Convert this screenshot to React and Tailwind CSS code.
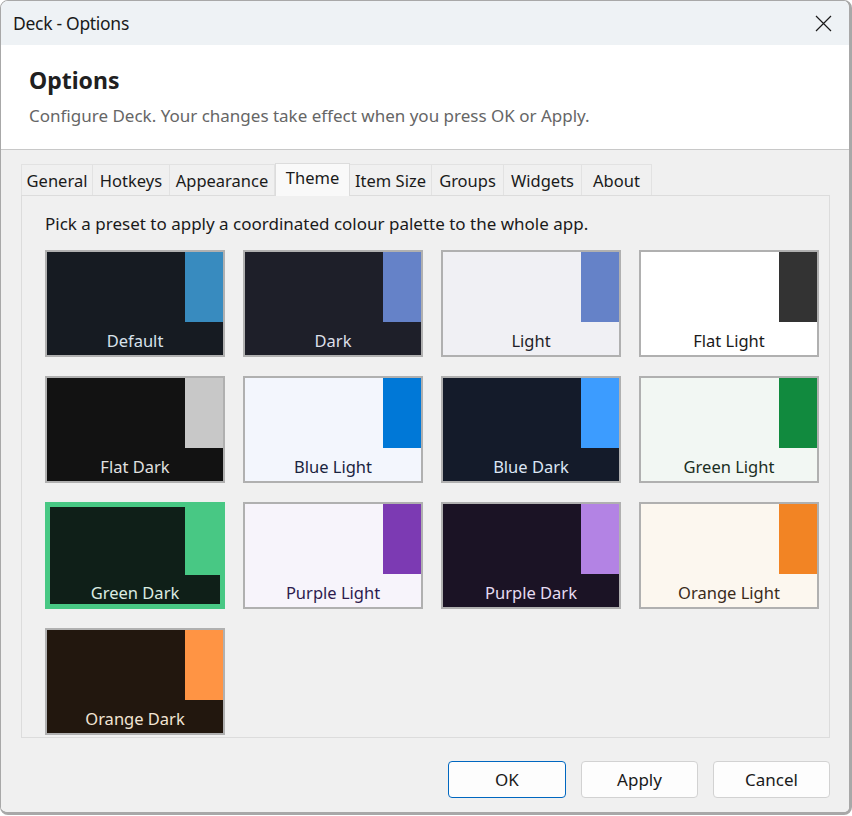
import React from 'react';

const TABS = [
  { name: 'General', w: 'w-[72px]' },
  { name: 'Hotkeys', w: 'w-[77px]' },
  { name: 'Appearance', w: 'w-[105px]' },
  { name: 'Theme', w: 'w-[75px]', active: true },
  { name: 'Item Size', w: 'w-[82px]' },
  { name: 'Groups', w: 'w-[72px]' },
  { name: 'Widgets', w: 'w-[78px]' },
  { name: 'About', w: 'w-[70px]' },
];

const PRESETS = [
  { name: 'Default', bg: 'bg-[#161b22]', accent: 'bg-[#388bbf]', text: 'text-[#d8e2ec]' },
  { name: 'Dark', bg: 'bg-[#1e1f29]', accent: 'bg-[#6582c8]', text: 'text-[#dcdfe8]' },
  { name: 'Light', bg: 'bg-[#f0f0f4]', accent: 'bg-[#6582c8]', text: 'text-[#1e1e28]' },
  { name: 'Flat Light', bg: 'bg-white', accent: 'bg-[#333333]', text: 'text-[#1a1a1a]' },
  { name: 'Flat Dark', bg: 'bg-[#121212]', accent: 'bg-[#c8c8c8]', text: 'text-[#e0e0e0]' },
  { name: 'Blue Light', bg: 'bg-[#f3f6fd]', accent: 'bg-[#0078d7]', text: 'text-[#1a2440]' },
  { name: 'Blue Dark', bg: 'bg-[#141b2a]', accent: 'bg-[#3c9cff]', text: 'text-[#dce6f5]' },
  { name: 'Green Light', bg: 'bg-[#f2f7f3]', accent: 'bg-[#118a3e]', text: 'text-[#1a2e22]' },
  { name: 'Green Dark', bg: 'bg-[#0f1f18]', accent: 'bg-[#48c884]', text: 'text-[#dcece2]', selected: true },
  { name: 'Purple Light', bg: 'bg-[#f7f4fb]', accent: 'bg-[#7c3ab3]', text: 'text-[#2d1b4e]' },
  { name: 'Purple Dark', bg: 'bg-[#1b1325]', accent: 'bg-[#b383e4]', text: 'text-[#e6dcf2]' },
  { name: 'Orange Light', bg: 'bg-[#fcf7ef]', accent: 'bg-[#f28424]', text: 'text-[#3a2a1a]' },
  { name: 'Orange Dark', bg: 'bg-[#22170e]', accent: 'bg-[#ff9444]', text: 'text-[#f2e4d4]' },
];

const Tile = ({ preset }) => {
  const sel = preset.selected;
  return (
    <div
      className={`flex h-[107px] w-[180px] flex-col overflow-hidden ${preset.bg} ${
        sel ? 'border-[5px] border-[#48c884]' : 'border-2 border-[#b0b0b0]'
      }`}
    >
      <div className={`flex shrink-0 justify-end ${sel ? 'h-[68px]' : 'h-[70px]'}`}>
        <div className={`${preset.accent} ${sel ? 'w-[35px]' : 'w-[38px]'}`} />
      </div>
      <div
        className={`text-center text-[16.5px] leading-[22px] ${preset.text} ${
          sel ? 'pt-[7px]' : 'pt-[8px]'
        }`}
      >
        {preset.name}
      </div>
    </div>
  );
};

export default function App() {
  return (
    <div className="h-[816px] w-[852px] bg-white font-['Noto_Sans',sans-serif] text-[#1a1a1a]">
      <div className="flex h-[815px] w-[852px] flex-col overflow-hidden rounded-[8px] border border-b-[3px] border-r-[3px] border-[#a8a8a8]">
        {/* title bar */}
        <div className="flex h-[44px] shrink-0 items-center justify-between bg-[#eef2f5] pl-[12px] pr-[17px]">
          <span className="text-[17.5px] tracking-[-0.3px]">Deck - Options</span>
          <svg width="17" height="17" viewBox="0 0 17 17" fill="none" stroke="#1a1a1a" strokeWidth="1.2">
            <path d="M1 1L16 16M16 1L1 16" />
          </svg>
        </div>

        {/* header */}
        <div className="flex h-[105px] shrink-0 flex-col border-b border-[#c8c8c8] bg-white px-[28px] pt-[19px]">
          <div className="text-[23px] font-bold leading-[32px] text-[#202020]">Options</div>
          <div className="mt-[8px] text-[17px] leading-[24px] text-[#666666]">
            Configure Deck. Your changes take effect when you press OK or Apply.
          </div>
        </div>

        {/* body */}
        <div className="flex flex-1 flex-col bg-[#f0f0f0] pl-[20px] pr-[19px] pt-[13px]">
          <div className="flex h-[32px] items-end">
            {TABS.map((t) =>
              t.active ? (
                <div
                  key={t.name}
                  className={`${t.w} relative z-10 -mb-px flex h-[33px] items-start justify-center border border-b-0 border-[#dcdcdc] bg-[#f9f9f9] pt-[2px] text-[16.5px]`}
                >
                  {t.name}
                </div>
              ) : (
                <div
                  key={t.name}
                  className={`${t.w} flex h-[31px] items-center justify-center border border-b-0 border-l-0 border-[#e2e2e2] pt-[2px] text-[16.5px] first:border-l`}
                >
                  {t.name}
                </div>
              )
            )}
          </div>

          <div className="h-[543px] overflow-hidden border border-[#dcdcdc] bg-[#f0f0f0] px-[23px] pt-[17px]">
            <div className="text-[17px] leading-[22px]">
              Pick a preset to apply a coordinated colour palette to the whole app.
            </div>
            <div className="mt-[15px] grid grid-cols-[repeat(4,180px)] gap-x-[18px] gap-y-[19px]">
              {PRESETS.map((p) => (
                <Tile key={p.name} preset={p} />
              ))}
            </div>
          </div>

          <div className="flex justify-end gap-[15px] pt-[23px]">
            <button className="h-[37px] w-[118px] rounded-[4px] border border-[#0067c0] bg-[#fdfdfd] text-[17px]">
              OK
            </button>
            <button className="h-[37px] w-[117px] rounded-[4px] border border-[#d2d2d2] bg-[#fdfdfd] text-[17px]">
              Apply
            </button>
            <button className="h-[37px] w-[117px] rounded-[4px] border border-[#d2d2d2] bg-[#fdfdfd] text-[17px]">
              Cancel
            </button>
          </div>
        </div>
      </div>
    </div>
  );
}
